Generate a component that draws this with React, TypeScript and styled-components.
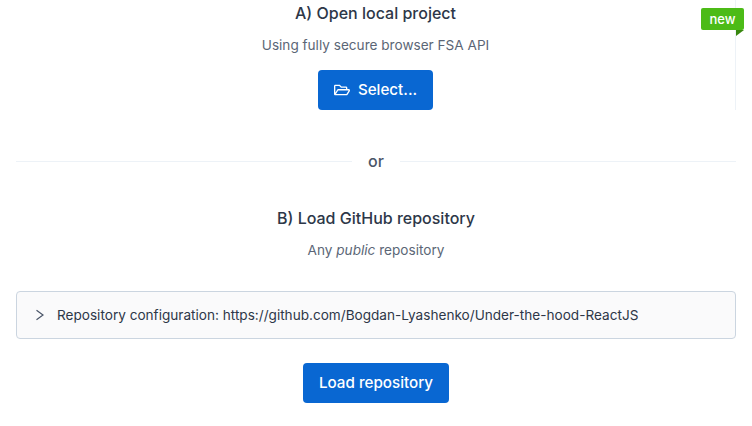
import React from "react"
import styled, { createGlobalStyle } from "styled-components"
import { FaRegFolderOpen } from "react-icons/fa"

const GlobalStyle = createGlobalStyle`
    html, body {
        margin: 0;
        padding: 0;
        background: #ffffff;
        font-family: Inter, "Liberation Sans", sans-serif;
    }
`

const Page = styled.div`
    width: 752px;
    height: 426px;
    box-sizing: border-box;
    padding: 0 16px;
    overflow: hidden;
`

const LocalSection = styled.section`
    position: relative;
    height: 110px;
    display: flex;
    flex-direction: column;
    align-items: center;
    border-right: 1px solid #edf2f7;
`

const NewBadge = styled.div`
    position: absolute;
    top: 8px;
    right: -9px;
    width: 43px;
    height: 22px;
    border-radius: 2px;
    background: #4cbb17;
    color: #ffffff;
    font-size: 13px;
    font-weight: 500;
    line-height: 22px;
    text-align: center;

    &::after {
        content: "";
        position: absolute;
        top: 22px;
        right: 0;
        border-style: solid;
        border-width: 6px 8px 0 0;
        border-color: #38870f transparent transparent transparent;
    }
`

const Title = styled.h2<{ $top: number }>`
    margin: ${(p) => p.$top}px 0 0;
    color: #2d3748;
    font-size: 16px;
    font-weight: 500;
    line-height: 24px;
`

const Subtitle = styled.p`
    margin: 10px 0 0;
    color: #4a5568;
    font-size: 13.6px;
    line-height: 21px;
    opacity: 0.9;
`

const Button = styled.button<{ $top: number }>`
    display: flex;
    align-items: center;
    justify-content: center;
    gap: 8px;
    height: 40px;
    margin-top: ${(p) => p.$top}px;
    padding: 0 16px;
    border: none;
    border-radius: 4px;
    background: #0967d2;
    color: #ffffff;
    font-family: inherit;
    font-size: 15.2px;
    font-weight: 500;
    line-height: 24px;
`

const Divider = styled.div`
    display: flex;
    align-items: center;
    gap: 16px;
    height: 24px;
    margin-top: 39px;
`

const Rule = styled.div`
    flex: 1;
    height: 1px;
    background: #edf2f7;
`

const DividerText = styled.span`
    color: #4a5568;
    font-size: 16px;
    font-weight: 500;
`

const RepoSection = styled.section`
    display: flex;
    flex-direction: column;
    align-items: center;
`

const Accordion = styled.div`
    box-sizing: border-box;
    display: flex;
    align-items: center;
    gap: 10px;
    align-self: stretch;
    height: 48px;
    margin-top: 30px;
    padding: 0 16px;
    border: 1px solid #cbd5e0;
    border-radius: 4px;
    background: #fafafb;
    color: #2d3748;
    font-size: 13.6px;
    line-height: 21px;
    white-space: nowrap;
`

const Chevron = () => (
    <svg width="14" height="12" viewBox="0 0 14 12" fill="none" stroke="#4a5568" strokeWidth="1.2">
        <path d="M3.5 1.2 L10 6 L3.5 10.8" />
    </svg>
)

export default function App() {
    return (
        <Page>
            <GlobalStyle />
            <LocalSection>
                <NewBadge>new</NewBadge>
                <Title $top={1}>A) Open local project</Title>
                <Subtitle>Using fully secure browser FSA API</Subtitle>
                <Button $top={14}>
                    <FaRegFolderOpen size={16} />
                    Select...
                </Button>
            </LocalSection>
            <Divider>
                <Rule />
                <DividerText>or</DividerText>
                <Rule />
            </Divider>
            <RepoSection>
                <Title $top={33}>B) Load GitHub repository</Title>
                <Subtitle>
                    Any <em>public</em> repository
                </Subtitle>
                <Accordion>
                    <Chevron />
                    Repository configuration: https://github.com/Bogdan-Lyashenko/Under-the-hood-ReactJS
                </Accordion>
                <Button $top={24}>Load repository</Button>
            </RepoSection>
        </Page>
    )
}
